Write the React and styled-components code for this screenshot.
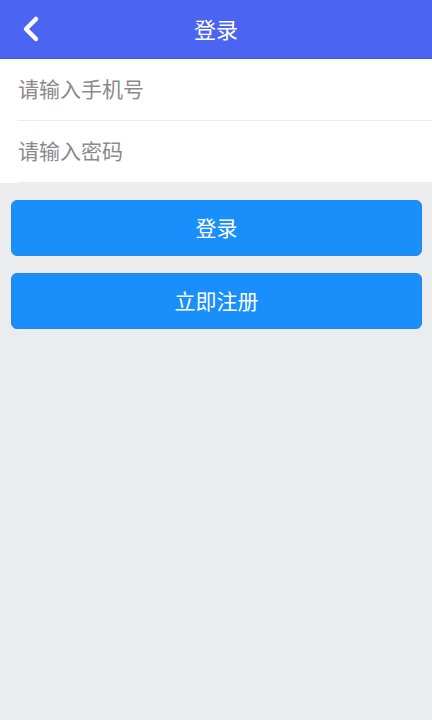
import styled, { createGlobalStyle } from "styled-components";

const GlobalStyle = createGlobalStyle`
	html, body {
		margin: 0;
		padding: 0;
		background: #ebeced;
	}
	body {
		font-family: "Noto Sans CJK SC", "Noto Sans", sans-serif;
	}
	#root {
		min-height: 720px;
	}
`;

export default function App() {
	return (
		<>
			<GlobalStyle />
			<Page>
				<Header>
					<Back aria-label="返回">
						<svg width="20" height="28" viewBox="0 0 20 28">
							<path
								d="M15 4 L5 14 L15 24"
								fill="none"
								stroke="#ffffff"
								strokeWidth="4.5"
								strokeLinecap="round"
								strokeLinejoin="round"
							/>
						</svg>
					</Back>
					<Title>登录</Title>
				</Header>
				<Form>
					<Field>
						<Input type="tel" placeholder="请输入手机号" />
					</Field>
					<Field>
						<Input type="password" placeholder="请输入密码" />
					</Field>
				</Form>
				<Actions>
					<Button>登录</Button>
					<Button>立即注册</Button>
				</Actions>
			</Page>
		</>
	);
}

const Page = styled.div`
	display: flex;
	flex-direction: column;
	min-height: 720px;
	background: #ebeced;
`;
const Header = styled.header`
	position: relative;
	display: flex;
	justify-content: center;
	align-items: center;
	height: 59px;
	padding-bottom: 2px;
	box-sizing: border-box;
	background: #4b64f2;
	border-bottom: 1px solid #3a55e6;
`;
const Back = styled.div`
	position: absolute;
	left: 21px;
	top: 15px;
	display: flex;
`;
const Title = styled.h1`
	margin: 0;
	font-weight: 400;
	font-size: 22px;
	color: #ffffff;
`;
const Form = styled.div`
	display: flex;
	flex-direction: column;
	background: #ffffff;
`;
const Field = styled.div`
	display: flex;
	align-items: center;
	height: 62px;
	padding-bottom: 3px;
	box-sizing: border-box;
	margin-left: 18px;
	border-bottom: 1px solid #ececec;
	&:last-child {
		border-bottom: 1px solid #ebeced;
	}
`;
const Input = styled.input`
	flex: 1;
	border: none;
	outline: none;
	padding: 0;
	background: transparent;
	font-family: "Noto Sans CJK SC", "Noto Sans", sans-serif;
	font-size: 21px;
	color: #333333;
	&::placeholder {
		color: #8a8a8a;
	}
`;
const Actions = styled.div`
	display: flex;
	flex-direction: column;
	gap: 17px;
	padding: 17px 10px 0 11px;
`;
const Button = styled.button`
	height: 56px;
	padding: 0 0 3px;
	border: 1px solid #2a84e6;
	border-radius: 6px;
	background: #188ffb;
	color: #ffffff;
	font-family: "Noto Sans CJK SC", "Noto Sans", sans-serif;
	font-size: 21px;
`;
